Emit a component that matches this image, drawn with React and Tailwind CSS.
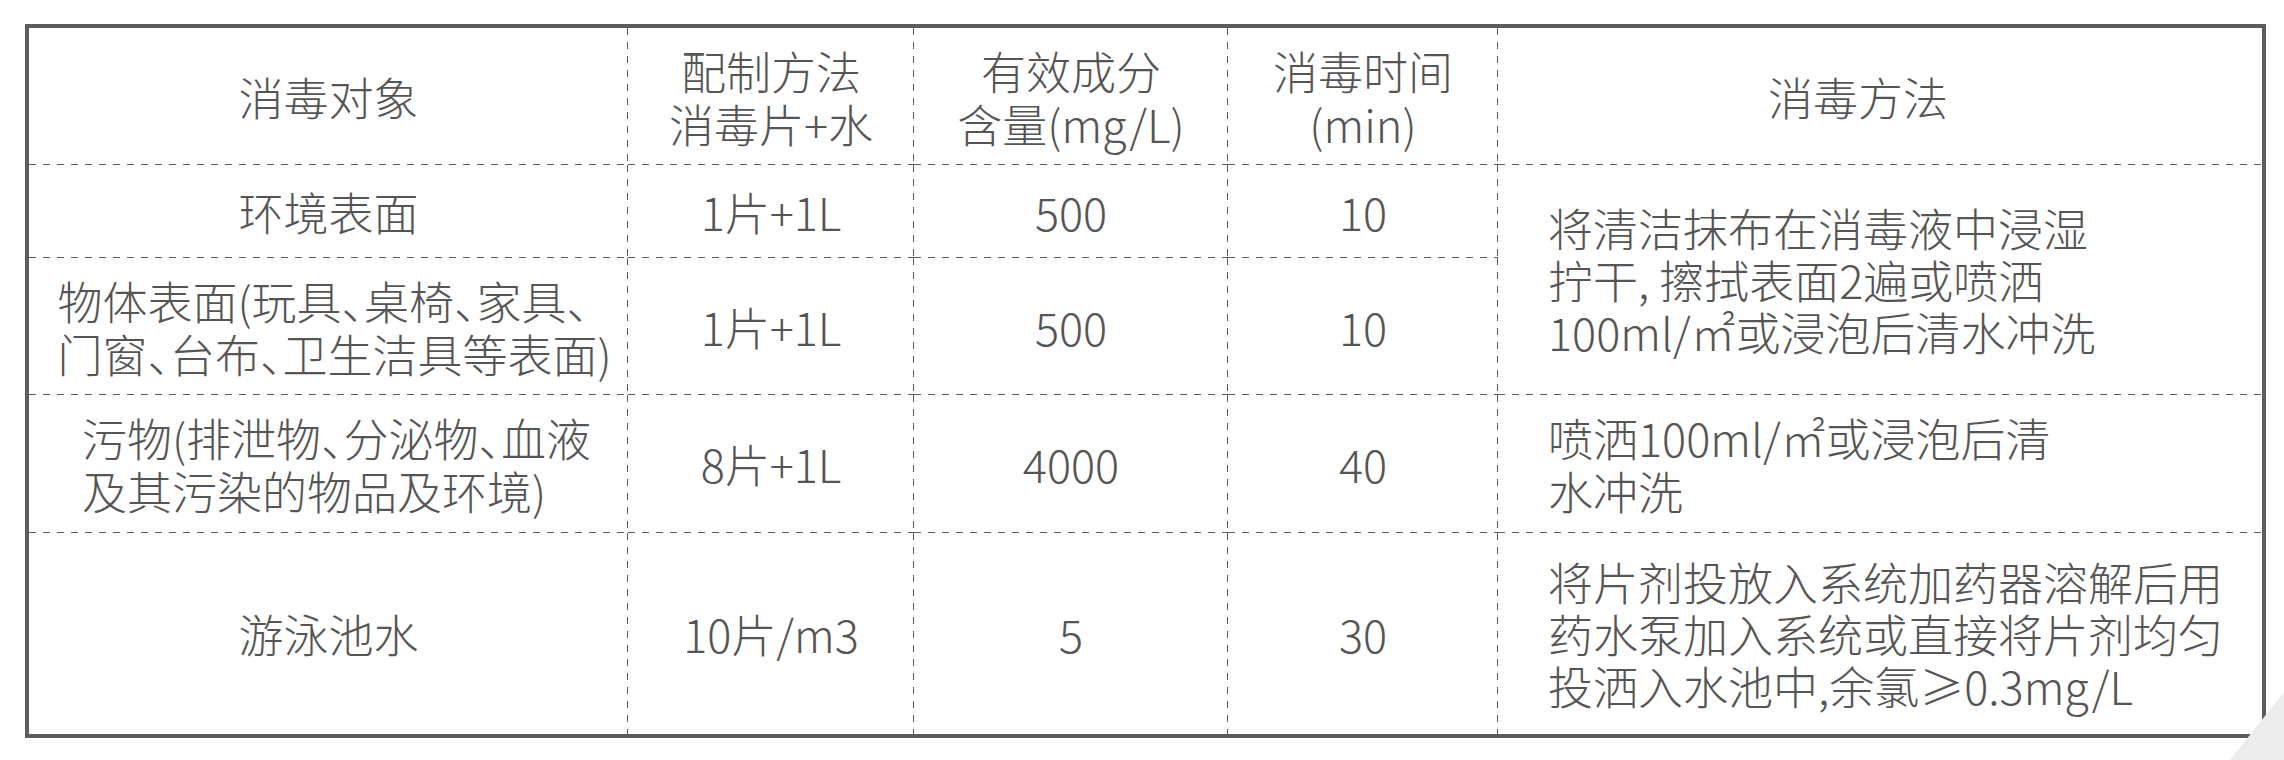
// App.jsx

const LINE = "#5c5c5c";

// dashed cell edges, drawn as background layers (7px dash / 7px gap)
const R =
  "bg-no-repeat [background-image:repeating-linear-gradient(to_bottom,#5c5c5c_0_7px,transparent_7px_14px)] [background-size:1px_100%] [background-position:right_top]";
const B =
  "bg-no-repeat [background-image:repeating-linear-gradient(to_right,#5c5c5c_0_7px,transparent_7px_14px)] [background-size:100%_1px] [background-position:left_bottom]";
const RB =
  "bg-no-repeat [background-image:repeating-linear-gradient(to_bottom,#5c5c5c_0_7px,transparent_7px_14px),repeating-linear-gradient(to_right,#5c5c5c_0_7px,transparent_7px_14px)] [background-size:1px_100%,100%_1px] [background-position:right_top,left_bottom]";

const Cell = ({ edge = "", className = "", children }) => (
  <div className={`flex items-center justify-center text-center ${edge} ${className}`}>
    {children}
  </div>
);

const Lines = ({ lines, className = "" }) => (
  <div className={className}>
    {lines.map((l, i) => (
      <div key={i} className="whitespace-nowrap">
        {l}
      </div>
    ))}
  </div>
);

const App = () => (
  <div className="relative w-[2284px] h-[760px] overflow-hidden bg-white text-[#555555] font-['Noto_Sans_CJK_SC','Noto_Sans',sans-serif] font-light text-[45px] leading-[52px] [font-feature-settings:'halt']">
    {/* corner decoration */}
    <svg className="absolute right-0 bottom-0" width="60" height="72" viewBox="0 0 60 72">
      <polygon points="60,4 60,72 6,72" fill="#ececec" />
    </svg>

    <div className="pt-[24px] pl-[25px]">
      <div
        className="w-[2241px] border-4 grid grid-cols-[599px_286px_314px_270px_764px] grid-rows-[137px_93px_137px_138px_201px]"
        style={{ borderColor: LINE }}
      >
        {/* header */}
        <Cell edge={RB}>消毒对象</Cell>
        <Cell edge={RB} className="leading-[53px]">
          <Lines lines={["配制方法", "消毒片+水"]} />
        </Cell>
        <Cell edge={RB} className="leading-[53px]">
          <Lines lines={["有效成分", "含量(mg/L)"]} />
        </Cell>
        <Cell edge={RB} className="leading-[53px]">
          <Lines lines={["消毒时间", "(min)"]} />
        </Cell>
        <Cell edge={B} className="pr-[44px]">消毒方法</Cell>

        {/* row 1 */}
        <Cell edge={RB}>环境表面</Cell>
        <Cell edge={RB}>1片+1L</Cell>
        <Cell edge={RB}>500</Cell>
        <Cell edge={RB}>10</Cell>
        <Cell edge={B} className="row-span-2 !justify-start pl-[50px]">
          <Lines
            className="text-left"
            lines={["将清洁抹布在消毒液中浸湿", "拧干, 擦拭表面2遍或喷洒", "100ml/㎡或浸泡后清水冲洗"]}
          />
        </Cell>

        {/* row 2 */}
        <Cell edge={RB} className="pl-[12px]">
          <Lines
            className="text-left leading-[53px]"
            lines={["物体表面(玩具、桌椅、家具、", "门窗、台布、卫生洁具等表面)"]}
          />
        </Cell>
        <Cell edge={RB}>1片+1L</Cell>
        <Cell edge={RB}>500</Cell>
        <Cell edge={RB}>10</Cell>

        {/* row 3 */}
        <Cell edge={RB} className="pl-[16px]">
          <Lines
            className="text-left leading-[53px]"
            lines={["污物(排泄物、分泌物、血液", "及其污染的物品及环境)"]}
          />
        </Cell>
        <Cell edge={RB}>8片+1L</Cell>
        <Cell edge={RB}>4000</Cell>
        <Cell edge={RB}>40</Cell>
        <Cell edge={B} className="!justify-start pl-[50px] leading-[53px]">
          <Lines className="text-left" lines={["喷洒100ml/㎡或浸泡后清", "水冲洗"]} />
        </Cell>

        {/* row 4 */}
        <Cell edge={R}>游泳池水</Cell>
        <Cell edge={R}>10片/m3</Cell>
        <Cell edge={R}>5</Cell>
        <Cell edge={R}>30</Cell>
        <Cell className="!justify-start pl-[50px]">
          <Lines
            className="text-left"
            lines={[
              "将片剂投放入系统加药器溶解后用",
              "药水泵加入系统或直接将片剂均匀",
              "投洒入水池中,余氯≥0.3mg/L",
            ]}
          />
        </Cell>
      </div>
    </div>
  </div>
);

export default App;
